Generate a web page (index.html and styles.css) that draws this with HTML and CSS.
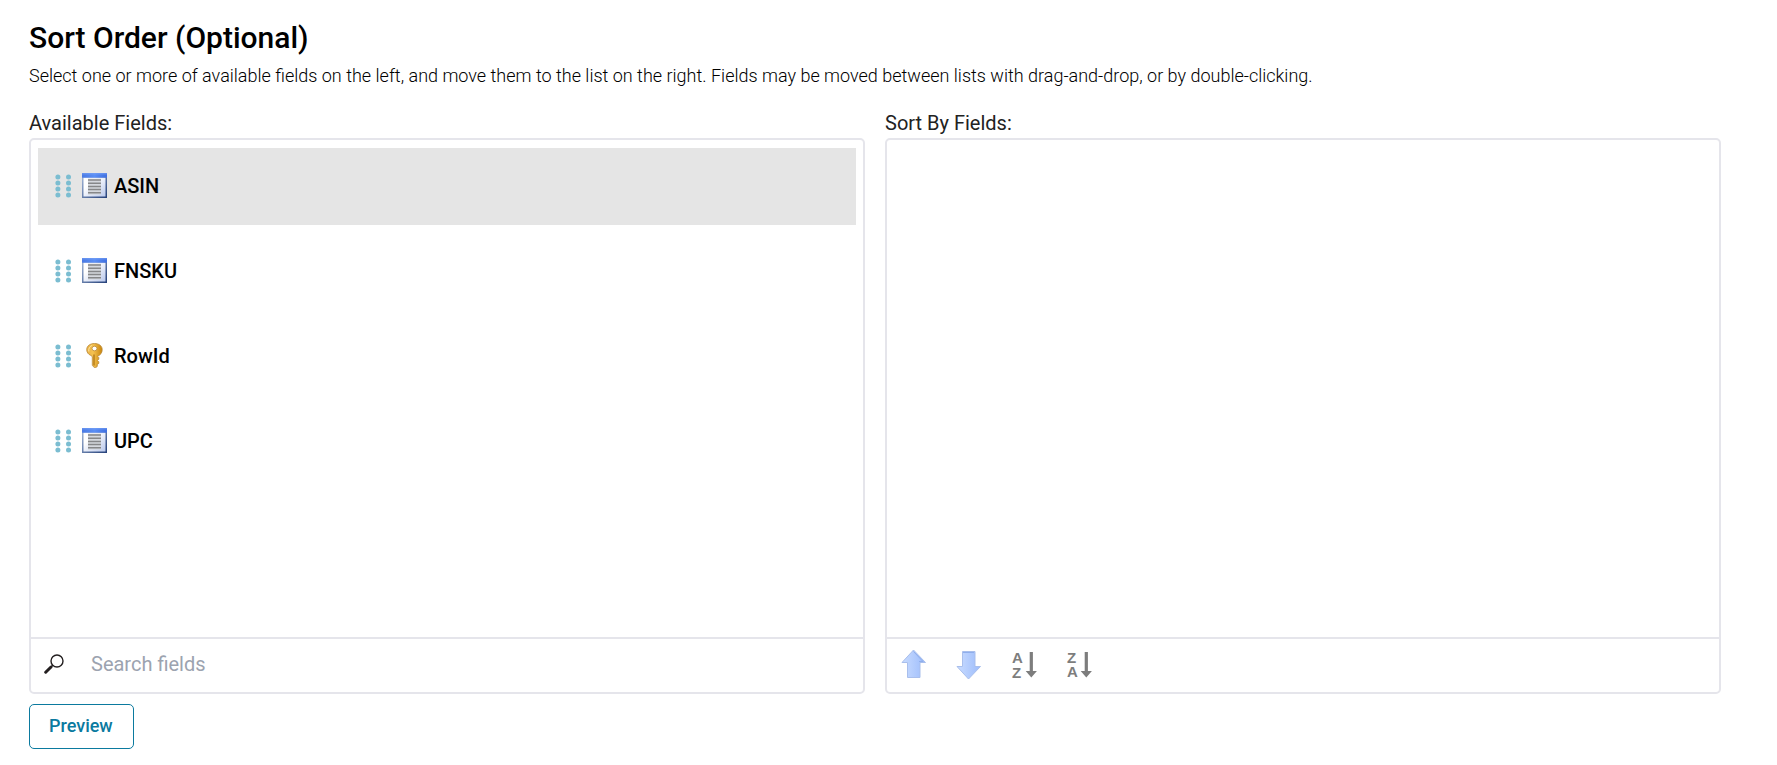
FILE: index.html
```html
<!DOCTYPE html>
<html lang="en">
<head>
    <meta charset="UTF-8">
    <meta name="viewport" content="width=device-width, initial-scale=1.0">
    <title>Sort Order</title>
    <link rel="stylesheet" href="styles.css">
</head>
<body>
    <!-- Shared icons -->
    <svg class="sprite" aria-hidden="true">
        <defs>
            <linearGradient id="barFill" x1="0" x2="1">
                <stop offset="0" stop-color="#4a7ae4"/>
                <stop offset="0.5" stop-color="#5a8ef5"/>
                <stop offset="1" stop-color="#3f6fe0"/>
            </linearGradient>
            <linearGradient id="frameFill" x1="0" y1="0" x2="1" y2="1">
                <stop offset="0" stop-color="#a9bddc"/>
                <stop offset="1" stop-color="#243f78"/>
            </linearGradient>
            <linearGradient id="paperFill" x1="0" y1="0" x2="1" y2="1">
                <stop offset="0.3" stop-color="#ffffff"/>
                <stop offset="1" stop-color="#b9c8ec"/>
            </linearGradient>
            <linearGradient id="keyFill" x1="0" x2="1">
                <stop offset="0" stop-color="#eab045"/>
                <stop offset="0.4" stop-color="#f5c250"/>
                <stop offset="1" stop-color="#c9850c"/>
            </linearGradient>
            <linearGradient id="arrowFill" x1="0" x2="1">
                <stop offset="0" stop-color="#c9dcff"/>
                <stop offset="1" stop-color="#9dbcfb"/>
            </linearGradient>
        </defs>
        <symbol id="grip" viewBox="0 0 16 24">
            <g fill="#7bbdd1">
                <circle cx="2.9" cy="3" r="2.5"/><circle cx="13.5" cy="3" r="2.5"/>
                <circle cx="2.9" cy="9" r="2.5"/><circle cx="13.5" cy="9" r="2.5"/>
                <circle cx="2.9" cy="15" r="2.5"/><circle cx="13.5" cy="15" r="2.5"/>
                <circle cx="2.9" cy="21" r="2.5"/><circle cx="13.5" cy="21" r="2.5"/>
            </g>
        </symbol>
        <symbol id="field" viewBox="0 0 25 25">
            <rect width="25" height="25" fill="url(#frameFill)"/>
            <rect x="1.5" y="4.5" width="22" height="19" fill="url(#paperFill)"/>
            <rect width="25" height="4.7" fill="url(#barFill)"/>
            <rect width="25" height="1.5" fill="#7da5f5" opacity="0.5"/>
            <rect x="6" y="5.6" width="13" height="16" fill="#d5d8de"/>
            <path d="M6 7h13M6 10.2h13M6 13.4h13M6 16.6h13M6 19.8h13" stroke="#868789" stroke-width="1.5"/>
        </symbol>
        <symbol id="key" viewBox="0 0 25 25">
            <path fill="url(#keyFill)" stroke="#b98a3c" stroke-width="0.8" fill-rule="evenodd" d="M12.5 0.5C8 0.5 4.7 3 4.7 6.7c0 2.6 1.6 4.6 4 5.7l1.6 1.2v8.7l2 2.3h1.5l1.5-1.2v-2l1.5-1v-1.7l-1.5-1.2 1.5-1.2v-1.7l-1.3-1.4c3-1.2 4.7-3.4 4.7-6.5C20.3 3 17 0.5 12.5 0.5zM12.5 3.2a2.5 2.3 0 1 1 0 4.6a2.5 2.3 0 1 1 0-4.6z"/>
            <path d="M12 11.5v11" stroke="#a96f10" stroke-width="1.2"/>
            <path d="M6.8 8.5c-0.5-3 1-5 3-6" fill="none" stroke="#fbe7a8" stroke-width="1"/>
        </symbol>
    </svg>

    <main class="sort-order">
        <h1>Sort Order (Optional)</h1>
        <p class="description">Select one or more of available fields on the left, and move them to the list on the right. Fields may be moved between lists with drag-and-drop, or by double-clicking.</p>

        <div class="columns">
            <section class="column">
                <h2 id="availableLabel">Available Fields:</h2>
                <div class="panel">
                    <ul class="field-list" aria-labelledby="availableLabel">
                        <li class="field selected" draggable="true">
                            <svg class="grip"><use href="#grip"/></svg>
                            <svg class="icon"><use href="#field"/></svg>
                            <span>ASIN</span>
                        </li>
                        <li class="field" draggable="true">
                            <svg class="grip"><use href="#grip"/></svg>
                            <svg class="icon"><use href="#field"/></svg>
                            <span>FNSKU</span>
                        </li>
                        <li class="field" draggable="true">
                            <svg class="grip"><use href="#grip"/></svg>
                            <svg class="icon"><use href="#key"/></svg>
                            <span>RowId</span>
                        </li>
                        <li class="field" draggable="true">
                            <svg class="grip"><use href="#grip"/></svg>
                            <svg class="icon"><use href="#field"/></svg>
                            <span>UPC</span>
                        </li>
                    </ul>
                    <div class="panel-footer">
                        <label class="search-icon" for="searchFields" aria-label="Search fields">
                            <svg width="20" height="20" viewBox="0 0 20 20" fill="none" stroke="#231f20">
                                <circle cx="13" cy="7" r="6" stroke-width="1.4"/>
                                <path d="M8.7 11.3l-2 2" stroke-width="1.5"/>
                                <path d="M7 13l-5.3 5.2" stroke-width="3" stroke-linecap="round"/>
                            </svg>
                        </label>
                        <input type="text" id="searchFields" placeholder="Search fields">
                    </div>
                </div>
            </section>

            <section class="column">
                <h2 id="sortByLabel">Sort By Fields:</h2>
                <div class="panel">
                    <ul class="field-list" aria-labelledby="sortByLabel"></ul>
                    <div class="panel-footer tools">
                        <button type="button" aria-label="Move up">
                            <svg width="28" height="32" viewBox="0 0 28 32">
                                <path d="M13.5 2L25.5 14.5h-5.5V29.5H7.5V14.5H2z" fill="url(#arrowFill)" stroke="#a9bfec"/>
                                <path d="M13.5 3.5L23 13.5h-4" fill="none" stroke="#8faeec"/>
                            </svg>
                        </button>
                        <button type="button" aria-label="Move down">
                            <svg width="28" height="32" viewBox="0 0 28 32">
                                <path d="M7.5 3.5H20V18.5h5.5L13.5 31 2 18.5h5.5z" fill="url(#arrowFill)" stroke="#a9bfec"/>
                                <path d="M8 4.5h11" stroke="#8faeec"/>
                            </svg>
                        </button>
                        <button type="button" aria-label="Sort ascending">
                            <svg width="28" height="32" viewBox="0 0 28 32" fill="#7d7d7d">
                                <text class="letter" x="2" y="15">A</text>
                                <text class="letter" x="2" y="30">Z</text>
                                <path d="M19.7 4h3.2v19h4l-5.600 6.5-5.600-6.5h4z"/>
                            </svg>
                        </button>
                        <button type="button" aria-label="Sort descending">
                            <svg width="28" height="32" viewBox="0 0 28 32" fill="#7d7d7d">
                                <text class="letter" x="2" y="15">Z</text>
                                <text class="letter" x="2" y="29">A</text>
                                <path d="M19.7 4h3.2v19h4l-5.600 6.5-5.600-6.5h4z"/>
                            </svg>
                        </button>
                    </div>
                </div>
            </section>
        </div>

        <button type="button" class="preview-btn">Preview</button>
    </main>
</body>
</html>
```

FILE: styles.css
```css
body {
    margin: 0;
    background-color: #fff;
    color: #000;
    font-family: Roboto, sans-serif;
    font-size: 20px;
    line-height: 24px;
}

.sprite {
    position: absolute;
    width: 0;
    height: 0;
}

.sort-order {
    padding: 20px 56px 16px 29px;
}

h1 {
    margin: 0;
    font-size: 30px;
    font-weight: 500;
    line-height: 36px;
}

.description {
    margin: 8px 0 23px;
    font-size: 18px;
    font-weight: 300;
}

.columns {
    display: grid;
    grid-template-columns: 1fr 1fr;
    gap: 20px;
}

h2 {
    margin: 0 0 3px;
    font-size: 20px;
    font-weight: 400;
    color: #222;
}

.panel {
    border: 2px solid #e5e5eb;
    border-radius: 5px;
}

.field-list {
    display: flex;
    flex-direction: column;
    gap: 8px;
    min-height: 481px;
    margin: 0;
    padding: 8px 7px;
    list-style: none;
}

.field {
    display: flex;
    align-items: center;
    height: 75px;
    padding: 0 0 2px 17px;
    font-weight: 500;
    cursor: move;
}

.field.selected {
    background-color: #e5e5e5;
}

.grip {
    width: 16px;
    height: 24px;
    margin-right: 11px;
}

.icon {
    width: 25px;
    height: 25px;
    margin-right: 7px;
}

.panel-footer {
    display: flex;
    align-items: center;
    height: 49px;
    padding-bottom: 4px;
    border-top: 2px solid #e5e5eb;
}

.search-icon {
    display: flex;
    padding: 0 27px 0 13px;
}

#searchFields {
    flex: 1;
    padding: 0;
    border: none;
    outline: none;
    font: inherit;
}

#searchFields::placeholder {
    color: #9ca3af;
}

.tools {
    gap: 27px;
    padding-left: 13px;
}

.tools button {
    display: flex;
    padding: 0;
    border: none;
    background: none;
    cursor: pointer;
}

.letter {
    font-size: 15px;
    font-weight: 700;
}

.preview-btn {
    margin-top: 10px;
    padding: 8px 20px 10px 19px;
    border: 1px solid #0b7a9f;
    border-radius: 5px;
    background-color: #fff;
    color: #0b7a9f;
    font-family: inherit;
    font-size: 18px;
    font-weight: 500;
    line-height: 25px;
    cursor: pointer;
}
```
